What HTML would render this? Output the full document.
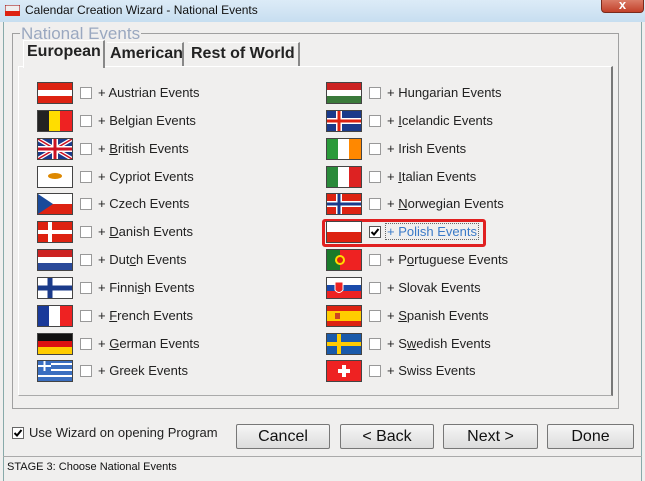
<!DOCTYPE html>
<html><head><meta charset="utf-8"><style>
*{margin:0;padding:0;box-sizing:border-box}
body{width:645px;height:481px;overflow:hidden;background:#f0efee;font-family:"Liberation Sans",sans-serif;position:relative}
.title{position:absolute;left:0;top:0;width:645px;height:22px;background:linear-gradient(#dcebf7,#c7def0);font-size:12px;color:#111}
.title span{position:absolute;left:25px;top:3px}
.close{position:absolute;left:601px;top:-4px;width:43px;height:17px;background:linear-gradient(#e08a76,#c2412a);border:1px solid #7a2a1c;border-radius:0 0 4px 4px;color:#fff;text-align:center;font-size:13px;font-weight:bold;line-height:15px}
.win{position:absolute;left:3px;top:22px;width:639px;height:459px;background:#f0efee;border-left:1px solid #8aa;border-right:1px solid #8aa}
.grp{position:absolute;left:12px;top:33px;width:607px;height:376px;border:1px solid #a0a0a0}
.grpl{position:absolute;left:20px;top:24px;background:#f0efee;color:#9aa8c0;font-size:17px;padding:0 1px}
.tab{position:absolute;top:42px;height:25px;font-size:16px;font-weight:bold;color:#222;padding:2px 0 0 3px;border-right:2px solid #888;border-top:1px solid #fff;white-space:nowrap}
.panel{position:absolute;left:18px;top:66px;width:595px;height:330px;border-top:1px solid #fff;border-left:1px solid #fff;border-right:2px solid #777;border-bottom:1px solid #aaa}
.row{position:absolute;height:22px;font-size:13px;color:#222}
.row svg{position:absolute;left:0;top:1px;outline:1px solid #444}
.cb{position:absolute;left:42px;top:5px;width:12px;height:12px;border:1px solid #999;background:#fff}
.row .t{position:absolute;left:60px;top:3px;white-space:nowrap}
.btn{position:absolute;top:424px;height:25px;border:1px solid #777;border-radius:2px;background:linear-gradient(#f6f6f6,#dcdcdc);font-size:16px;text-align:center;line-height:23px;color:#111}
.status{position:absolute;left:3px;top:456px;width:639px;height:25px;border-top:1px solid #aaa;font-size:11px;padding:4px 4px;color:#111}
</style></head><body>
<div class="title"><svg style="position:absolute;left:5px;top:5px" width="15" height="11"><rect width="15" height="11" fill="#eee" stroke="#900"/><rect y="6" width="15" height="5" fill="#d21"/></svg><span>Calendar Creation Wizard - National Events</span></div>
<div class="close">x</div>
<div class="win"></div>
<div class="grp"></div>
<div class="grpl">National Events</div>
<div class="tab" style="left:23px;top:40px;width:82px;height:28px;background:#f0efee;z-index:2;border-left:1px solid #fff">European</div>
<div class="tab" style="left:107px;width:77px">American</div>
<div class="tab" style="left:188px;width:112px">Rest of World</div>
<div class="panel"></div>

<div class="row" style="left:38px;top:82px"><svg width="34" height="20"><rect width="34" height="20" fill="#d21"/><rect y="7" width="34" height="6" fill="#fff"/></svg><div class="cb"></div><div class="t">+ Austrian Events</div></div>
<div class="row" style="left:38px;top:110px"><svg width="34" height="20"><rect width="12" height="20" fill="#222"/><rect x="11" width="12" height="20" fill="#fd0"/><rect x="22" width="12" height="20" fill="#e22"/></svg><div class="cb"></div><div class="t">+ Belgian Events</div></div>
<div class="row" style="left:38px;top:138px"><svg width="34" height="20"><rect width="34" height="20" fill="#1a3a8a"/><path d="M0 0L34 20M34 0L0 20" stroke="#fff" stroke-width="4"/><path d="M0 0L34 20M34 0L0 20" stroke="#c12" stroke-width="1.5"/><path d="M17 0V20M0 10H34" stroke="#fff" stroke-width="6"/><path d="M17 0V20M0 10H34" stroke="#c12" stroke-width="3"/></svg><div class="cb"></div><div class="t">+ <u>B</u>ritish Events</div></div>
<div class="row" style="left:38px;top:166px"><svg width="34" height="20"><rect width="34" height="20" fill="#fff"/><ellipse cx="17" cy="9" rx="7" ry="3" fill="#d80"/></svg><div class="cb"></div><div class="t">+ Cypriot Events</div></div>
<div class="row" style="left:38px;top:193px"><svg width="34" height="20"><rect width="34" height="10" fill="#fff"/><rect y="10" width="34" height="10" fill="#d21"/><path d="M0 0L15 10L0 20Z" fill="#1a4a9a"/></svg><div class="cb"></div><div class="t">+ Czech Events</div></div>
<div class="row" style="left:38px;top:221px"><svg width="34" height="20"><rect width="34" height="20" fill="#d21"/><path d="M12 0V20M0 10H34" stroke="#fff" stroke-width="4"/></svg><div class="cb"></div><div class="t">+ <u>D</u>anish Events</div></div>
<div class="row" style="left:38px;top:249px"><svg width="34" height="20"><rect width="34" height="7" fill="#c22"/><rect y="7" width="34" height="7" fill="#fff"/><rect y="13" width="34" height="7" fill="#2a4a9a"/></svg><div class="cb"></div><div class="t">+ Dut<u>c</u>h Events</div></div>
<div class="row" style="left:38px;top:277px"><svg width="34" height="20"><rect width="34" height="20" fill="#fff"/><path d="M12 0V20M0 10H34" stroke="#1a3a8a" stroke-width="5"/></svg><div class="cb"></div><div class="t">+ Finni<u>s</u>h Events</div></div>
<div class="row" style="left:38px;top:305px"><svg width="34" height="20"><rect width="12" height="20" fill="#1a3a9a"/><rect x="11" width="12" height="20" fill="#fff"/><rect x="22" width="12" height="20" fill="#e22"/></svg><div class="cb"></div><div class="t">+ <u>F</u>rench Events</div></div>
<div class="row" style="left:38px;top:333px"><svg width="34" height="20"><rect width="34" height="7" fill="#111"/><rect y="7" width="34" height="7" fill="#d11"/><rect y="13" width="34" height="7" fill="#fc0"/></svg><div class="cb"></div><div class="t">+ <u>G</u>erman Events</div></div>
<div class="row" style="left:38px;top:360px"><svg width="34" height="20"><rect width="34" height="20" fill="#3a6ec0"/><path d="M0 3H34M0 9H34M0 15H34" stroke="#fff" stroke-width="2"/><rect width="13" height="10" fill="#3a6ec0"/><path d="M6.5 0V10M0 5H13" stroke="#fff" stroke-width="2"/></svg><div class="cb"></div><div class="t">+ Greek Events</div></div>

<div class="row" style="left:327px;top:82px"><svg width="34" height="20"><rect width="34" height="20" fill="#fff"/><rect width="34" height="7" fill="#c22"/><rect y="13" width="34" height="7" fill="#3a7a3a"/></svg><div class="cb"></div><div class="t">+ Hungarian Events</div></div>
<div class="row" style="left:327px;top:110px"><svg width="34" height="20"><rect width="34" height="20" fill="#1a3a8a"/><path d="M12 0V20M0 10H34" stroke="#fff" stroke-width="6"/><path d="M12 0V20M0 10H34" stroke="#d21" stroke-width="3"/></svg><div class="cb"></div><div class="t">+ <u>I</u>celandic Events</div></div>
<div class="row" style="left:327px;top:138px"><svg width="34" height="20"><rect width="12" height="20" fill="#2a9a3a"/><rect x="11" width="12" height="20" fill="#fff"/><rect x="22" width="12" height="20" fill="#f80"/></svg><div class="cb"></div><div class="t">+ Irish Events</div></div>
<div class="row" style="left:327px;top:166px"><svg width="34" height="20"><rect width="12" height="20" fill="#2a8a3a"/><rect x="11" width="12" height="20" fill="#fff"/><rect x="22" width="12" height="20" fill="#d22"/></svg><div class="cb"></div><div class="t">+ <u>I</u>talian Events</div></div>
<div class="row" style="left:327px;top:193px"><svg width="34" height="20"><rect width="34" height="20" fill="#d21"/><path d="M12 0V20M0 10H34" stroke="#fff" stroke-width="6"/><path d="M12 0V20M0 10H34" stroke="#1a3a8a" stroke-width="3"/></svg><div class="cb"></div><div class="t">+ <u>N</u>orwegian Events</div></div>
<div style="position:absolute;left:322px;top:219px;width:164px;height:28px;border:3px solid #e02020;border-radius:3px"></div>
<div class="row" style="left:327px;top:221px"><svg width="34" height="20"><rect width="34" height="20" fill="#fff"/><rect y="10" width="34" height="10" fill="#d21"/></svg><div class="cb" style="border-color:#555">
<svg width="10" height="10" style="position:absolute;left:0;top:0;outline:none"><path d="M1.5 5L4 7.5L8.5 2" stroke="#000" stroke-width="2" fill="none"/></svg></div><div class="t" style="color:#3a7ac8;left:58px;border:1px dotted #666;padding:0 1px;top:2px">+ Polish Events</div></div>
<div class="row" style="left:327px;top:249px"><svg width="34" height="20"><rect width="34" height="20" fill="#e22"/><rect width="13" height="20" fill="#1a7a2a"/><circle cx="13" cy="10" r="5" fill="#fd0"/><circle cx="13" cy="10" r="3" fill="#d21"/></svg><div class="cb"></div><div class="t">+ P<u>o</u>rtuguese Events</div></div>
<div class="row" style="left:327px;top:277px"><svg width="34" height="20"><rect width="34" height="7" fill="#fff"/><rect y="7" width="34" height="7" fill="#1a4aaa"/><rect y="13" width="34" height="7" fill="#e22"/><path d="M8 4H16V12Q12 17 8 12Z" fill="#e22" stroke="#fff"/></svg><div class="cb"></div><div class="t">+ Slovak Events</div></div>
<div class="row" style="left:327px;top:305px"><svg width="34" height="20"><rect width="34" height="20" fill="#d21"/><rect y="5" width="34" height="10" fill="#fc0"/><rect x="8" y="7" width="5" height="6" fill="#c42"/></svg><div class="cb"></div><div class="t">+ <u>S</u>panish Events</div></div>
<div class="row" style="left:327px;top:333px"><svg width="34" height="20"><rect width="34" height="20" fill="#1a5aaa"/><path d="M12 0V20M0 10H34" stroke="#fc0" stroke-width="4"/></svg><div class="cb"></div><div class="t">+ S<u>w</u>edish Events</div></div>
<div class="row" style="left:327px;top:360px"><svg width="34" height="20"><rect width="34" height="20" fill="#e22"/><path d="M17 4V16M11 10H23" stroke="#fff" stroke-width="4"/></svg><div class="cb"></div><div class="t">+ Swiss Events</div></div>

<div style="position:absolute;left:12px;top:427px;width:12px;height:12px;border:1px solid #666;background:#fff"><svg width="10" height="10" style="position:absolute;left:0;top:0"><path d="M1.5 5L4 7.5L8.5 2" stroke="#000" stroke-width="2" fill="none"/></svg></div>
<div style="position:absolute;left:29px;top:425px;font-size:13px;color:#222">Use Wizard on opening Program</div>
<div class="btn" style="left:236px;width:94px">Cancel</div>
<div class="btn" style="left:340px;width:94px">&lt; Back</div>
<div class="btn" style="left:443px;width:95px">Next &gt;</div>
<div class="btn" style="left:547px;width:87px">Done</div>
<div class="status">STAGE 3: Choose National Events</div>
</body></html>
